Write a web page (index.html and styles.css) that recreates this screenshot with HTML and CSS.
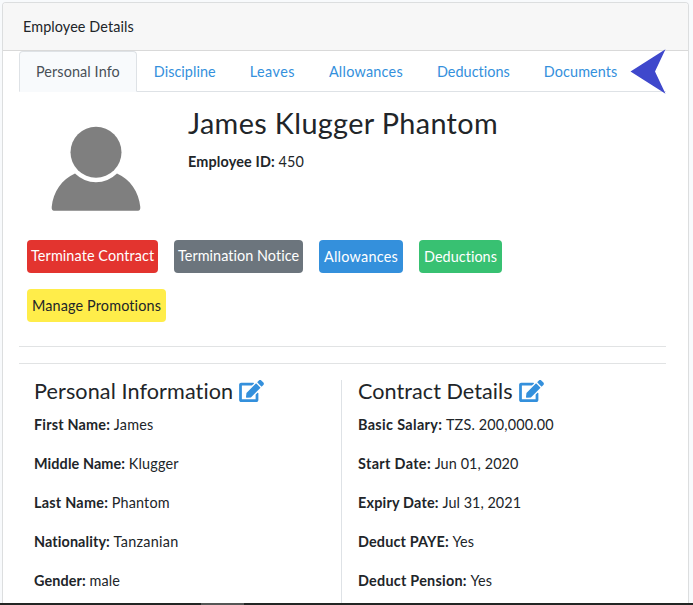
FILE: index.html
```html
<!DOCTYPE html>
<html lang="en">
<head>
<meta charset="utf-8">
<title>Employee Details</title>
<link rel="stylesheet" href="styles.css">
</head>
<body>
<svg class="defs" aria-hidden="true"><symbol id="edit" viewBox="0 0 576 512"><path d="M402.6 83.2l90.2 90.2c3.8 3.8 3.8 10 0 13.8L274.4 405.6l-92.8 10.3c-12.4 1.4-22.9-9.1-21.5-21.5l10.3-92.8L388.8 83.2c3.8-3.8 10-3.8 13.8 0zm162-22.9l-48.8-48.8c-15.2-15.2-39.9-15.2-55.2 0l-35.4 35.4c-3.8 3.8-3.8 10 0 13.8l90.2 90.2c3.8 3.8 10 3.8 13.8 0l35.4-35.4c15.2-15.3 15.2-40 0-55.2zM384 346.2V448H64V128h229.8c3.2 0 6.2-1.3 8.5-3.5l40-40c7.6-7.6 2.2-20.5-8.5-20.5H48C21.5 64 0 85.5 0 112v352c0 26.5 21.5 48 48 48h352c26.5 0 48-21.5 48-48V306.2c0-10.7-12.9-16-20.5-8.5l-40 40c-2.2 2.3-3.5 5.3-3.5 8.5z"/></symbol></svg>
<div class="viewport">
  <main class="card">
    <header class="card-header t1">Employee Details</header>
    <div class="card-body">
      <nav class="tabs">
        <a class="tab active t1">Personal Info</a>
        <a class="tab t05">Discipline</a>
        <a class="tab t45">Leaves</a>
        <a class="tab t25">Allowances</a>
        <a class="tab t05">Deductions</a>
        <a class="tab t1">Documents</a>
        <svg class="pointer" viewBox="0 0 36 46" aria-hidden="true"><path d="M0.5 22.5L35.5 0.3 25 22.5 35.5 44.7Z"/></svg>
      </nav>
      <section class="profile">
        <svg class="avatar" viewBox="0 0 90 86" aria-hidden="true"><circle cx="45" cy="27.3" r="25.5"/><path d="M3 85.8Q0.5 85.8 0.7 82C2 67 11 54 24 48.5A29.8 29.8 0 0 0 66 48.5C79 54 88 67 89.3 82Q89.5 85.8 87 85.8Z"/></svg>
        <div>
          <h2 class="name">James Klugger Phantom</h2>
          <p class="line"><b class="t15">Employee ID:</b> <span class="t1">450</span></p>
        </div>
      </section>
      <div class="actions">
        <button class="btn danger t1">Terminate Contract</button>
        <button class="btn secondary t05">Termination Notice</button>
        <button class="btn primary t25">Allowances</button>
        <button class="btn success t05">Deductions</button>
        <button class="btn warning t15">Manage Promotions</button>
      </div>
      <hr>
      <hr>
      <div class="columns">
        <section class="column personal">
          <h4 class="title t1">Personal Information <svg class="edit"><use href="#edit"/></svg></h4>
          <p class="line"><b class="t2">First Name:</b> <span class="t2">James</span></p>
          <p class="line"><b class="t1">Middle Name:</b> <span class="t2">Klugger</span></p>
          <p class="line"><b class="t25">Last Name:</b> <span class="t15">Phantom</span></p>
          <p class="line"><b class="t1">Nationality:</b> <span class="t3">Tanzanian</span></p>
          <p class="line"><b class="t1">Gender:</b> <span class="t1">male</span></p>
        </section>
        <section class="column contract">
          <h4 class="title t05">Contract Details <svg class="edit"><use href="#edit"/></svg></h4>
          <p class="line"><b class="t35">Basic Salary:</b> <span class="t15">TZS. 200,000.00</span></p>
          <p class="line"><b class="t35">Start Date:</b> <span class="t1">Jun 01, 2020</span></p>
          <p class="line"><b class="t2">Expiry Date:</b> <span class="t05">Jul 31, 2021</span></p>
          <p class="line"><b class="t15">Deduct PAYE:</b> <span class="t1">Yes</span></p>
          <p class="line"><b class="t25">Deduct Pension:</b> <span class="t1">Yes</span></p>
        </section>
      </div>
    </div>
  </main>
  <footer class="bar"><span class="bar-item"></span></footer>
</div>
</body>
</html>
```
FILE: styles.css
```css
* { box-sizing: border-box; }
body {
  margin: 0;
  background: #f8fafc;
  color: #212529;
  font: 14.4px/23px Lato, "Open Sans", sans-serif;
}
.defs { display: none; }
.viewport { display: flex; flex-direction: column; height: 605px; overflow: hidden; }
.card {
  flex: 1;
  min-height: 0;
  margin: 2px 4px 0 2px;
  border: 1px solid #dcdedf;
  border-bottom: 0;
  border-radius: 4px 4px 0 0;
  background: #fff;
  overflow: hidden;
}
.card-header {
  height: 48px;
  padding: 12px 20px;
  background: #f7f7f7;
  border-bottom: 1px solid #d9d9d9;
}
.card-body { padding: 0 22px 0 16px; }

.tabs { position: relative; display: flex; height: 41px; border-bottom: 1px solid #dee2e6; }
.tab {
  height: 41px;
  padding: 8px 16px;
  border: 1px solid transparent;
  border-radius: 4px 4px 0 0;
  color: #3490dc;
}
.tab.active { background: #f8fafc; border-color: #dee2e6 #dee2e6 #f8fafc; color: #495057; }
.pointer { position: absolute; left: 611px; top: -2px; width: 36px; height: 46px; fill: #3f48cc; }

.profile { display: flex; height: 148px; padding: 14px 0 0 32px; }
.avatar { width: 90px; height: 86px; margin: 19px 47px 0 0; fill: #7f7f7f; }
.name { margin: 0 0 9px; font-size: 28.8px; line-height: 35px; font-weight: 400; letter-spacing: .36px; }
.line { margin: 0 0 16px; }

.actions { display: flex; flex-wrap: wrap; gap: 16px; padding: 0 100px 0 8px; }
.btn {
  height: 33px;
  padding: 0 4px 2px;
  border: 0;
  border-radius: 4px;
  font: inherit;
  line-height: 31px;
  color: #fff;
  white-space: nowrap;
}
.danger { width: 131px; background: #e3342f; }
.secondary { width: 129px; background: #6c757d; }
.primary { width: 84px; padding-bottom: 0; background: #3490dc; }
.success { width: 83px; padding-bottom: 0; background: #38c172; }
.warning { width: 139px; padding-bottom: 0; background: #ffed4a; color: #212529; }

hr { height: 1px; margin: 16px 0 0; border: 0; background: #e1e3e4; }
.actions + hr { margin-top: 24px; }
.columns { display: grid; grid-template-columns: 323px 1fr; margin-top: 16px; }
.column { height: 300px; padding: 0 15px; }
.personal { border-right: 1px solid #dee2e6; }
.contract { padding-left: 16px; }
.title {
  display: flex;
  align-items: flex-start;
  gap: 6px;
  height: 33px;
  margin: 0;
  font-size: 21.6px;
  line-height: 23px;
  font-weight: 400;
}
.edit { width: 25px; height: 22px; fill: #3490dc; }

.t05 { letter-spacing: .05px; }
.t1 { letter-spacing: .1px; }
.t15 { letter-spacing: .15px; }
.t2 { letter-spacing: .2px; }
.t25 { letter-spacing: .25px; }
.t3 { letter-spacing: .3px; }
.t35 { letter-spacing: .35px; }
.t45 { letter-spacing: .45px; }

.bar { flex: none; height: 2px; padding-left: 201px; background: #232624; }
.bar-item { display: block; width: 43px; height: 2px; background: #555756; }
```
